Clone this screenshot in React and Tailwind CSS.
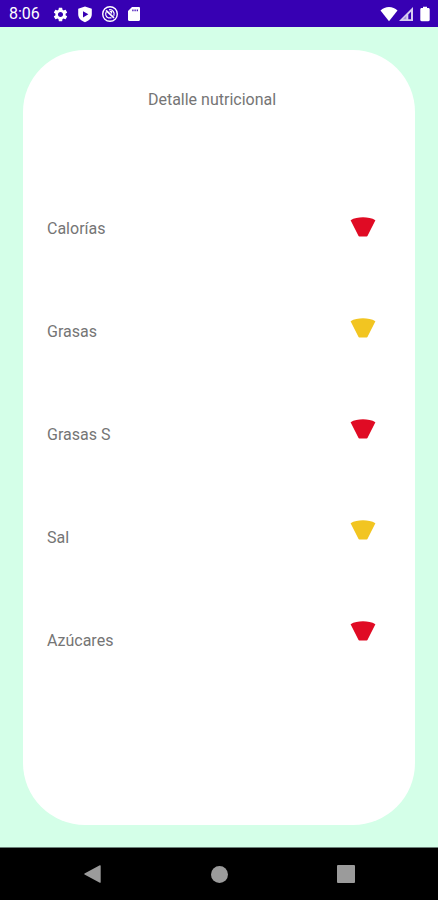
import React from 'react'
import { MdSettings } from 'react-icons/md'

const nutrients = [
  { name: 'Calorías', level: 'alto' },
  { name: 'Grasas', level: 'medio' },
  { name: 'Grasas S', level: 'alto' },
  { name: 'Sal', level: 'medio' },
  { name: 'Azúcares', level: 'alto' },
]

const levelColors = {
  alto: 'text-[#e00b24]',
  medio: 'text-[#f2c521]',
}

function ShieldIcon() {
  return (
    <svg viewBox="0 0 16 18" className="h-[18px] w-4" fill="currentColor" aria-hidden="true">
      <path
        fillRule="evenodd"
        d="M8 1.500 1.200 3.800v5.400c0 3.600 2.400 6.300 6.800 8 4.400-1.700 6.800-4.400 6.800-8V3.800ZM6 6.200 11.400 9.300 6 12.400Z"
      />
    </svg>
  )
}

function DebugIcon() {
  return (
    <svg viewBox="0 0 18 18" className="h-[18px] w-[18px]" fill="none" stroke="currentColor" aria-hidden="true">
      <circle cx="9" cy="9" r="7.300" strokeWidth="1.400" />
      <path d="M7 12.700A4.300 4.300 0 0 1 5.200 7M8 4.800a4.300 4.300 0 0 1 4.800 6" strokeWidth="1.300" />
      <path d="M5 5.300 13 12.800" strokeWidth="1.700" />
      <path d="M7 12.900h3.500M8.700 6.700h1.800v1.800" strokeWidth="1.300" />
    </svg>
  )
}

function SdCardIcon() {
  return (
    <svg viewBox="0 0 14 16" className="h-4 w-[14px]" fill="currentColor" aria-hidden="true">
      <path
        fillRule="evenodd"
        d="M5 1h6.800c.7 0 1.200.5 1.200 1.200v11.600c0 .7-.5 1.200-1.200 1.200H2.200C1.500 15 1 14.500 1 13.800V5Zm.3 2.500v1.700h1.200V3.500Zm2.200 0v1.700h1.200V3.500Zm2.200 0v1.700h1.200V3.500Z"
      />
    </svg>
  )
}

function WifiIcon() {
  return (
    <svg viewBox="0 0 18 16" className="h-4 w-[18px]" fill="currentColor" aria-hidden="true">
      <path d="M9 15.300.5 4.600C2.800 2.400 5.700 1 9 1s6.200 1.400 8.500 3.600Z" />
    </svg>
  )
}

function SignalIcon() {
  return (
    <svg viewBox="0 0 16 16" className="h-4 w-4" fill="currentColor" aria-hidden="true">
      <path d="M15 1v14H1Z" opacity="0.800" />
      <path d="M10.300 8.400 13 5.800v7.400h-2.700Z" fill="#3700b3" />
      <path d="M4.800 13.300 8.300 9.800v3.500Z" fill="#3700b3" opacity="0.300" />
    </svg>
  )
}

function BatteryIcon() {
  return (
    <svg viewBox="0 0 10 16" className="h-4 w-[10px]" fill="currentColor" aria-hidden="true">
      <path d="M3 .8h4v1.200h1.400c.7 0 1.300.6 1.300 1.300v10.800c0 .6-.6 1.100-1.300 1.100H1.600c-.7 0-1.300-.5-1.300-1.100V3.300C.3 2.600.9 2 1.600 2H3Z" />
    </svg>
  )
}

function LevelIcon({ level }) {
  return (
    <svg viewBox="0 0 26 20" className={`h-5 w-[26px] ${levelColors[level]}`} role="img" aria-label={level}>
      <path fill="currentColor" d="M.6 3.200C4 1.200 8.500.3 13 .3s9 .9 12.400 2.900L17.600 18.800c-.2.500-.5.700-1 .7H9.400c-.5 0-.8-.2-1-.7Z" />
    </svg>
  )
}

function StatusBar() {
  return (
    <header className="flex h-[27px] items-center justify-between bg-[#3700b3] pr-2 pl-[9px] text-white">
      <div className="flex items-center">
        <span className="w-[43px] pt-px text-base leading-5">8:06</span>
        <div className="flex items-center gap-2 pt-px">
          <MdSettings className="h-[17px] w-[17px]" aria-hidden="true" />
          <ShieldIcon />
          <DebugIcon />
          <SdCardIcon />
        </div>
      </div>
      <div className="flex items-center">
        <WifiIcon />
        <SignalIcon />
        <span className="w-[6px]" />
        <BatteryIcon />
      </div>
    </header>
  )
}

function NavigationBar() {
  return (
    <nav className="flex h-[53px] items-center justify-around border-t border-[#6b8078] bg-black px-[29px] text-[#9b9b9b]">
      <button type="button" aria-label="Atrás" className="p-2">
        <svg viewBox="0 0 18 20" className="h-5 w-[18px]" fill="currentColor">
          <path d="M15.800 1.300c.4-.3.900 0 .9.500v16.400c0 .5-.5.800-.9.500L.5 10.500c-.4-.3-.4-.7 0-1Z" />
        </svg>
      </button>
      <button type="button" aria-label="Inicio" className="p-2">
        <span className="block h-[17px] w-[17px] rounded-full bg-[#9b9b9b]" />
      </button>
      <button type="button" aria-label="Recientes" className="p-2">
        <span className="block h-[18px] w-[18px] rounded-[1px] bg-[#9b9b9b]" />
      </button>
    </nav>
  )
}

function App() {
  return (
    <div className="flex min-h-screen flex-col bg-[#d4ffe8] font-['Roboto','Noto_Sans',sans-serif]">
      <StatusBar />

      <main className="flex flex-1 flex-col px-[23px] pt-[23px] pb-[22px]">
        <section className="flex-1 rounded-[62px] bg-white px-6 pt-[38px] pb-16 text-base leading-6 text-[#757575]">
          <h1 className="pr-[14px] text-center">Detalle nutricional</h1>

          <div className="flex items-start justify-between pt-[105px] pr-[15px]">
            <ul className="flex flex-col gap-[79px]">
              {nutrients.map(({ name }) => (
                <li key={name}>{name}</li>
              ))}
            </ul>
            <ul className="flex flex-col gap-[81px]">
              {nutrients.map(({ name, level }) => (
                <li key={name} className="flex">
                  <LevelIcon level={level} />
                </li>
              ))}
            </ul>
          </div>
        </section>
      </main>

      <NavigationBar />
    </div>
  )
}

export default App
